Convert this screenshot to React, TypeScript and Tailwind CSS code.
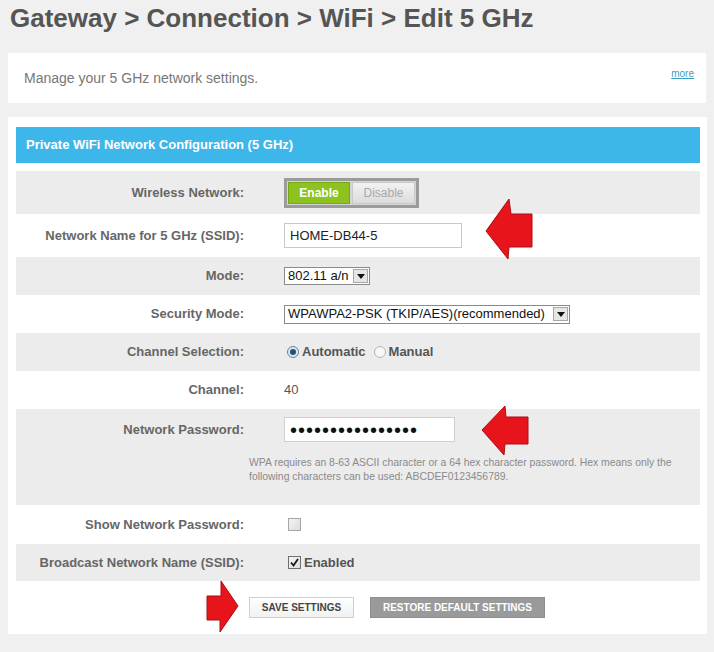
import React from "react";

const rows = [
  { label: "Wireless Network:", h: "h-[43px]", bg: "bg-[#ececec]", kind: "toggle" },
  { label: "Network Name for 5 GHz (SSID):", h: "h-[43px]", bg: "bg-white", kind: "ssid" },
  { label: "Mode:", h: "h-[38px]", bg: "bg-[#ececec]", kind: "mode" },
  { label: "Security Mode:", h: "h-[38px]", bg: "bg-white", kind: "security" },
  { label: "Channel Selection:", h: "h-[38px]", bg: "bg-[#ececec]", kind: "channelSel" },
  { label: "Channel:", h: "h-[38px]", bg: "bg-white", kind: "channel" },
];

function SelectArrow() {
  return (
    <div className="w-[15px] h-[14px] border border-[#a8a8a8] bg-[#e6e6e6] flex items-center justify-center mr-[1px]">
      <svg width="8" height="5" viewBox="0 0 8 5">
        <polygon points="0,0 8,0 4,5" fill="#111" />
      </svg>
    </div>
  );
}

function Radio({ on }: { on?: boolean }) {
  return (
    <span className={`inline-flex w-[12px] h-[12px] rounded-full border items-center justify-center ${on ? "border-[#6d7f92] bg-[#dfe8f0]" : "border-[#b5b5b5] bg-[#f7f7f7]"}`}>
      {on && <span className="w-[6px] h-[6px] rounded-full bg-[#1f4f7c]" />}
    </span>
  );
}

function Check({ on }: { on?: boolean }) {
  return (
    <span className={`inline-flex w-[13px] h-[13px] border items-center justify-center bg-gradient-to-br from-[#f4f4f4] to-[#dcdcdc] ${on ? "border-[#6f6f6f]" : "border-[#a6a6a6]"}`}>
      {on && (
        <svg width="9" height="9" viewBox="0 0 9 9">
          <polyline points="1,4.5 3.5,7.5 8,1" fill="none" stroke="#1a1a1a" strokeWidth="1.8" />
        </svg>
      )}
    </span>
  );
}

function Value({ kind }: { kind: string }) {
  if (kind === "toggle")
    return (
      <div className="flex gap-[2px] border-[3px] border-[#9b9b9b] bg-[#d6d6d6] p-[1px]">
        <div className="w-[62px] h-[22px] bg-[#8dc21f] border border-[#78a817] flex items-center justify-center text-white font-bold text-[12px]">Enable</div>
        <div className="w-[63px] h-[22px] bg-gradient-to-b from-[#f2f2f2] to-[#dcdcdc] border border-[#c8c8c8] flex items-center justify-center text-[#a9a9a9] text-[12px]">Disable</div>
      </div>
    );
  if (kind === "ssid")
    return (
      <div className="w-[178px] h-[25px] border border-[#c9c9c9] bg-white flex items-center px-[5px] text-[13px] text-[#222]">HOME-DB44-5</div>
    );
  if (kind === "mode")
    return (
      <div className="w-[86px] h-[18px] border border-[#8a8a8a] bg-white flex items-center justify-between pl-[3px] text-[13px] text-[#111]">
        802.11 a/n
        <SelectArrow />
      </div>
    );
  if (kind === "security")
    return (
      <div className="w-[286px] h-[19px] border border-[#8a8a8a] bg-white flex items-center justify-between pl-[3px] text-[13px] text-[#111]">
        WPAWPA2-PSK (TKIP/AES)(recommended)
        <SelectArrow />
      </div>
    );
  if (kind === "channelSel")
    return (
      <div className="flex items-center text-[13px] font-bold text-[#555] pl-[3px]">
        <Radio on />
        <span className="ml-[3px]">Automatic</span>
        <span className="ml-[8px] flex"><Radio /></span>
        <span className="ml-[3px]">Manual</span>
      </div>
    );
  return <span className="text-[13px] text-[#555]">40</span>;
}

function Label({ children }: { children: React.ReactNode }) {
  return <div className="w-[228px] text-right text-[13px] font-bold text-[#666] shrink-0">{children}</div>;
}

export default function App() {
  return (
    <div className="relative h-[652px] bg-[#f0f0f0] font-['Liberation_Sans',Arial,sans-serif] overflow-hidden">
      <h1 className="pl-[10px] pt-[3px] h-[53px] text-[26px] leading-[30px] font-bold text-[#555]">
        Gateway &gt; Connection &gt; WiFi &gt; Edit 5 GHz
      </h1>

      <div className="mx-[8px] h-[50px] bg-white flex items-center justify-between pl-[16px] pr-[12px]">
        <p className="text-[14px] text-[#777]">Manage your 5 GHz network settings.</p>
        <a className="text-[10px] text-[#3a9cc0] underline self-start mt-[13px]">more</a>
      </div>

      <div className="ml-[8px] w-[699px] mt-[14px] bg-white pt-[10px] pl-[8px] pr-[7px]">
        <div className="h-[36px] bg-[#3db7ea] flex items-center pl-[10px] text-white font-bold text-[13px]">
          Private WiFi Network Configuration (5 GHz)
        </div>
        <div className="mt-[8px]">
          {rows.map((r) => (
            <div key={r.label} className={`${r.h} ${r.bg} flex items-center`}>
              <Label>{r.label}</Label>
              <div className="ml-[40px] flex items-center">
                <Value kind={r.kind} />
              </div>
            </div>
          ))}

          {/* password row */}
          <div className="h-[96px] bg-[#ececec] pt-[8px]">
            <div className="h-[25px] flex items-center">
              <Label>Network Password:</Label>
              <div className="ml-[40px] w-[171px] h-[25px] border border-[#d0d0d0] bg-white flex items-center pl-[5px] text-[20px] tracking-[1px] text-[#111] leading-none">
                ••••••••••••••••
              </div>
            </div>
            <p className="mt-[14px] pl-[233px] pr-[20px] text-[10.4px] leading-[14px] text-[#8a8a8a]">
              WPA requires an 8-63 ASCII character or a 64 hex character password. Hex means only the following characters can be used: ABCDEF0123456789.
            </p>
          </div>

          <div className="h-[39px] bg-white flex items-center">
            <Label>Show Network Password:</Label>
            <div className="ml-[44px] flex items-center">
              <Check />
            </div>
          </div>
          <div className="h-[37px] bg-[#ececec] flex items-center">
            <Label>Broadcast Network Name (SSID):</Label>
            <div className="ml-[44px] flex items-center gap-[3px] text-[13px] font-bold text-[#555]">
              <Check on />
              Enabled
            </div>
          </div>

          <div className="h-[53px] flex items-start pt-[16px] pl-[233px] gap-[16px]">
            <button className="w-[105px] h-[21px] border border-[#cfcfcf] bg-gradient-to-b from-white to-[#f1f1f1] text-[10px] font-bold text-[#444]">SAVE SETTINGS</button>
            <button className="w-[175px] h-[21px] bg-[#9a9a9a] border border-[#8e8e8e] text-[10px] font-bold text-white">RESTORE DEFAULT SETTINGS</button>
          </div>
        </div>
      </div>

      {/* red annotation arrows */}
      <svg className="absolute left-[484px] top-[196px]" width="50" height="66" viewBox="0 0 50 66">
        <polygon points="2,35 25,3 27,18 48,18 48,51 25,51 24,63" fill="#e8141c" stroke="#a90f16" strokeWidth="1" strokeLinejoin="round" />
      </svg>
      <svg className="absolute left-[480px] top-[404px]" width="50" height="53" viewBox="0 0 50 53">
        <polygon points="2,26 25,2 26,13 48,13 48,40 25,40 24,51" fill="#e8141c" stroke="#a90f16" strokeWidth="1" strokeLinejoin="round" />
      </svg>
      <svg className="absolute left-[205px] top-[579px]" width="36" height="55" viewBox="0 0 36 55">
        <polygon points="2,17 16,17 16,2 33,27 15,53 15,41 2,41" fill="#e8141c" stroke="#a90f16" strokeWidth="1" strokeLinejoin="round" />
      </svg>
    </div>
  );
}
